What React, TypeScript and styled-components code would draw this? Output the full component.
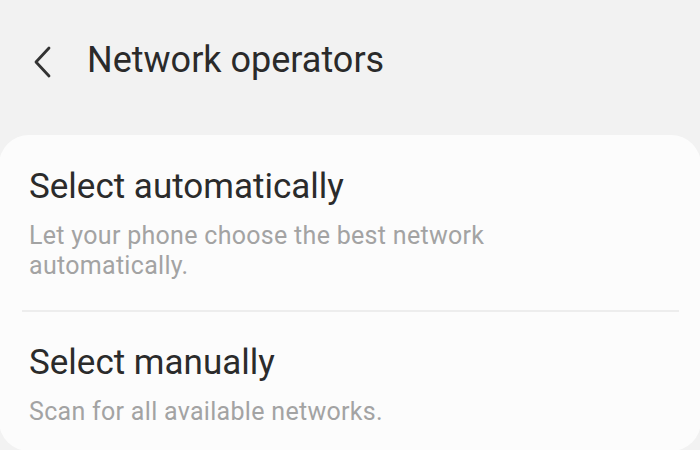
import React from "react";
import styled, { createGlobalStyle } from "styled-components";

const Global = createGlobalStyle`
  html, body { margin: 0; padding: 0; background: #f2f2f2; }
  body { font-family: Roboto, "Noto Sans", Arial, sans-serif; -webkit-font-smoothing: antialiased; }
`;

const Page = styled.div`
  width: 700px;
  height: 450px;
  overflow: hidden;
  background: #f2f2f2;
  display: flex;
  flex-direction: column;
`;

const Header = styled.header`
  display: flex;
  align-items: center;
  height: 44px;
  padding: 38px 0 0 33px;
  margin-bottom: 53px;
  gap: 35px;
`;

const BackButton = styled.button`
  display: flex;
  align-items: center;
  justify-content: center;
  width: 19px;
  height: 32px;
  padding: 0;
  border: none;
  background: none;
  margin-top: 3px;
`;

const Title = styled.h1`
  margin: 0;
  font-size: 36px;
  line-height: 44px;
  font-weight: 400;
  color: #2a2a2a;
  letter-spacing: 0;
`;

const Card = styled.section`
  background: #fcfcfc;
  border-radius: 30px;
  margin: 0 0 0 -1px;
  width: 702px;
  padding: 31px 0 24px;
  display: flex;
  flex-direction: column;
`;

const Item = styled.div<{ $top?: number }>`
  padding: ${(p) => p.$top ?? 0}px 29px 0 30px;
  display: flex;
  flex-direction: column;
  gap: 14px;
`;

const ItemTitle = styled.div`
  font-size: 35px;
  line-height: 41px;
  color: #2b2b2b;
  letter-spacing: 0;
`;

const ItemDesc = styled.div`
  font-size: 25px;
  line-height: 30px;
  color: #a3a3a3;
  max-width: 500px;
  letter-spacing: 0.3px;
`;

const Divider = styled.hr`
  border: none;
  height: 2px;
  background: #ededed;
  margin: 29px 22px 0 23px;
`;

export default function App() {
  return (
    <Page>
      <Global />
      <Header>
        <BackButton aria-label="Back">
          <svg width="19" height="32" viewBox="0 0 19 32" fill="none">
            <path d="M16 2 L3 16 L16 30" stroke="#333" strokeWidth="2.8" strokeLinecap="round" strokeLinejoin="round" />
          </svg>
        </BackButton>
        <Title>Network operators</Title>
      </Header>
      <Card>
        <Item>
          <ItemTitle>Select automatically</ItemTitle>
          <ItemDesc>Let your phone choose the best network automatically.</ItemDesc>
        </Item>
        <Divider />
        <Item $top={30}>
          <ItemTitle>Select manually</ItemTitle>
          <ItemDesc>Scan for all available networks.</ItemDesc>
        </Item>
      </Card>
    </Page>
  );
}
